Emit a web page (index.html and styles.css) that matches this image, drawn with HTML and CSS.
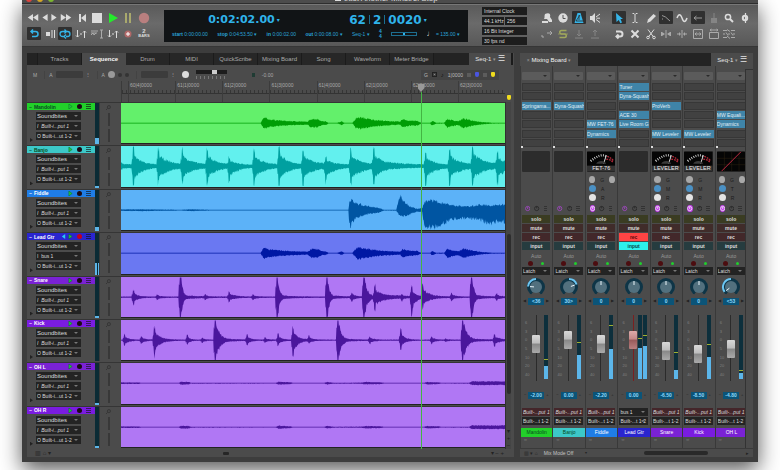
FILE: index.html
```html
<!DOCTYPE html>
<html lang="en">
<head>
<meta charset="utf-8">
<title>Just Another Minstrel Stop</title>
<link rel="stylesheet" href="styles.css">
</head>
<body>
<div class="window">
  <header class="titlebar"><i class="dot red"></i><i class="dot amber"></i><i class="dot lime"></i><span class="title"><i class="doc"></i>Just Another Minstrel Stop</span></header>

  <div class="toolbar">
    <div class="tools transport">
      <div class="tool-row">
        <div class="seek">
          <button aria-label="Rewind"><svg viewBox="0 0 12 8"><path d="M6 0v8L0 4zM12 0v8L6 4z"/></svg></button>
          <button class="slim" aria-label="Back"><svg viewBox="0 0 6 8"><path d="M6 0v8L0 4z"/></svg></button>
          <button class="slim" aria-label="Forward"><svg viewBox="0 0 6 8"><path d="M0 0v8l6-4z"/></svg></button>
          <button aria-label="Fast forward"><svg viewBox="0 0 12 8"><path d="M0 0v8l6-4zM6 0v8l6-4z"/></svg></button>
        </div>
        <button aria-label="To start"><svg viewBox="0 0 14 12"><path d="M4 2h2v8H4zM11 2v8L6 6z"/></svg></button>
        <button aria-label="Stop"><svg viewBox="0 0 14 12"><path d="M2 1h10v10H2z"/></svg></button>
        <button class="play" aria-label="Play"><svg viewBox="0 0 14 12"><path d="M3 1v10l9-5z"/></svg></button>
        <button class="pause" aria-label="Pause"><svg viewBox="0 0 14 12"><path d="M4 1h2v10H4zM8 1h2v10H8z"/></svg></button>
        <button class="record" aria-label="Record"><svg viewBox="0 0 14 12"><circle cx="7" cy="6" r="5.2"/></svg></button>
      </div>
      <div class="tool-row">
        <button class="on" aria-label="Auto rewind"><svg class="line" viewBox="0 0 14 12"><path d="M4 3.500h4.500a2.400 2.400 0 0 1 0 5H5M6 1.500l-2 2 2 2" stroke-width="1.500"/></svg></button>
        <button aria-label="Auto stop"><svg viewBox="0 0 14 12"><path d="M3 4h4v4H3zM8.500 2h1v8h-1zM11 2h1v8h-1z"/></svg></button>
        <button class="on" aria-label="Memory cycle"><svg class="line" viewBox="0 0 14 12"><path d="M8 3.500h1.500a2.500 2.500 0 0 1 0 5H8M6 8.500H4.500a2.500 2.500 0 0 1 0-5H8M6.500 1.500l2 2-2 2M8 6.500l-2 2 2 2" stroke-width="1.300"/></svg></button>
        <button aria-label="Punch"><svg class="line thin" viewBox="0 0 14 12"><path d="M3.500 2v7M2 7.500l1.500 1.500L5 7.500M6 6h2M10.500 10V3M9 4.500l1.500-1.500L12 4.500"/></svg></button>
        <button class="muted" aria-label="Selection"><svg class="line thin" viewBox="0 0 14 12"><path d="M1 3h7M1 5h6M1 7l2-2 1 2 2-2M10 2h3M10 10h3M11.500 2v8"/></svg></button>
        <button aria-label="Link"><svg class="line thin" viewBox="0 0 14 12"><path d="M3.500 2v7M2 7.500l1.500 1.500L5 7.500M6 6h2M10.500 10V3M9 4.500l1.500-1.500L12 4.500"/></svg></button>
        <button class="blush" aria-label="Overdub"><svg viewBox="0 0 14 12"><circle cx="7" cy="6" r="3.500"/><path d="M6.500 4h1v1.500H9v1H7.500V8h-1V6.500H5v-1h1.500z" fill="#fff"/></svg></button>
        <button class="bars" aria-label="Count-in"><b>2</b><span>BARS</span></button>
      </div>
    </div>

    <section class="counter" aria-label="Counter">
      <div class="clocks"><div class="time">0:02:02.00<i>▾</i></div><div class="beat">62<u></u>2<u></u>0020<i>▾</i></div></div>
      <div class="marks">
        <span><b>start</b> 0:00:00.00</span><span><b>stop</b> 0:04:53.50 ▾</span><span><b>in</b> 0:00:02.00</span><span><b>out</b> 0:00:08.00 ▾</span><span>Seq-1 ▾</span>
        <span class="sig"><em>4</em><em>4</em></span><span class="tempo-bar"></span><span><q>♩</q> = 135.00 ▾</span>
      </div>
    </section>

    <div class="sync">
      <select aria-label="Sync source"><option>Internal Clock</option></select>
      <div class="pair"><select aria-label="Sample rate"><option>44.1 kHz</option></select><select aria-label="Buffer"><option>256</option></select></div>
      <select aria-label="Bit depth"><option>16 Bit Integer</option></select>
      <select aria-label="Frame rate"><option>30 fps nd</option></select>
    </div>

    <div class="tools group-a">
      <div class="tool-row">
        <button aria-label="Solo"><svg viewBox="0 0 14 12"><path d="M5 2c4-2 6 0 5 3l2 3v2H9L7 7H4c1-1 0-3 1-5zM2 9h6v2H2z"/></svg></button>
        <button aria-label="Clock"><svg viewBox="0 0 14 12"><circle cx="7" cy="6" r="4.700"/><path d="M7 3v3.500h2.500" fill="none" stroke="#555"/></svg></button>
        <button class="on" aria-label="Metronome"><svg viewBox="0 0 14 12"><path d="M5.500 1h3l3 10h-9z"/><path d="M7 3v5M4 9l4-6M4 9h7" fill="none" stroke="#2b2b2b" stroke-width=".8"/></svg></button>
        <button aria-label="Audible"><svg viewBox="0 0 14 12"><path d="M2 4h2l3-3v10L4 8H2z"/><path d="M8 5l4-3M8.500 6.200H12M8 7.500l4 3" fill="none" stroke="#ddd"/></svg></button>
      </div>
      <div class="tool-row">
        <button class="muted" aria-label="Follow"><svg class="line thin" viewBox="0 0 14 12"><path d="M2 9h2M2 9V7M7 5h5M10 3l2 2-2 2"/></svg></button>
        <button class="olive" aria-label="Slave"><svg class="line" viewBox="0 0 14 12"><path d="M10.500 2.500H5.500a1.700 1.700 0 0 0 0 3.500h3a1.700 1.700 0 0 1 0 3.500h-5" stroke-width="1.500"/><path d="M2 6h10" stroke-width=".7"/></svg></button>
        <button class="faint" aria-label="Download"><svg class="line thin" viewBox="0 0 14 12"><path d="M7 2v6M5 6l2 2 2-2M3 10h8"/></svg></button>
        <button class="faint" aria-label="Upload"><svg class="line thin" viewBox="0 0 14 12"><path d="M7 8V2M5 4l2-2 2 2M3 10h8"/></svg></button>
      </div>
    </div>
    <div class="tools group-b">
      <div class="tool-row">
        <button class="on" aria-label="Pointer"><svg viewBox="0 0 14 12"><path d="M4 1l7 6H8.500l1.500 3.500-1.700.8L6.800 8 4.500 10z"/></svg></button>
        <button aria-label="I-beam"><svg class="line thin" viewBox="0 0 14 12"><path d="M4.500 1.500h1.500l1 1 1-1h1.500M7 2.500v7M4.500 10.500h1.500l1-1 1 1h1.500"/></svg></button>
        <button aria-label="Pencil"><svg viewBox="0 0 14 12"><path d="M3 11l1-3.500L9.500 2 12 4 6.500 9.500z"/></svg></button>
        <button class="pressed" aria-label="Reshape"><svg class="line thin" viewBox="0 0 14 12"><path d="M3 3.500l3.500 1.500 4.500 4M3 7h1"/></svg></button>
        <button aria-label="Curve"><svg class="line" viewBox="0 0 14 12"><path d="M2 6c1.500-4.500 3.500-4.500 5 0s3.500 4.500 5 0" stroke-width="1.500"/></svg></button>
        <button class="pressed" aria-label="Nudge"><svg class="line thin" viewBox="0 0 14 12"><path d="M3 6h8M5.500 4l-2.500 2 2.500 2"/></svg></button>
        <button class="faint" aria-label="Brush"><svg viewBox="0 0 14 12"><path d="M6.500 1h1v5H10v5H4V6h2.500z"/></svg></button>
        <button aria-label="Zoom"><svg class="line" viewBox="0 0 14 12"><circle cx="6" cy="5" r="2.600" stroke-width="1.500"/><path d="M8 7l3 3"/></svg></button>
        <button aria-label="Scrub"><svg class="line" viewBox="0 0 14 12"><circle cx="7" cy="6" r="2.200"/><path d="M7.500 1v10" stroke-width="1.200"/></svg></button>
      </div>
      <div class="tool-row">
        <button aria-label="Loop"><svg class="line" viewBox="0 0 14 12"><path d="M4 3.500h4a2.500 2.500 0 0 1 0 5H5M6.500 6.500l-2 2 2 2"/></svg></button>
        <button aria-label="Mute"><svg class="line" viewBox="0 0 14 12"><path d="M3.500 2.500l7 7M10.500 2.500l-7 7"/></svg></button>
        <button aria-label="Scissors"><svg class="line thin" viewBox="0 0 14 12"><path d="M4 1.500l5.500 7.500M10 1.500L4.500 9"/><circle cx="4" cy="9.500" r="1.300"/><circle cx="10" cy="9.500" r="1.300"/></svg></button>
        <button class="muted" aria-label="Split"><svg viewBox="0 0 14 12"><path d="M6.500 2h1v8h-1zM2 4h1v4H2zM3 4l3 2-3 2zM11 4h1v4h-1zM11 4L8 6l3 2z"/></svg></button>
        <button class="muted" aria-label="Join"><svg viewBox="0 0 14 12"><path d="M6.500 2h1v8h-1zM2 5.500h2V4l2 2-2 2V6.500H2zM12 5.500h-2V4L8 6l2 2V6.500h2z"/></svg></button>
        <button class="muted" aria-label="Fit"><svg class="line thin" viewBox="0 0 14 12"><path d="M2.500 1.500h9v9h-9zM4 6h6M5.500 4.500L4 6l1.500 1.500M8.500 4.500L10 6 8.500 7.500"/></svg></button>
        <button class="muted" aria-label="Region"><svg class="line thin" viewBox="0 0 14 12"><path d="M2.500 4.500h9v6h-9zM3 2h8M4.500 1L3 2l1.500 1M9.500 1L11 2 9.500 3"/></svg></button>
        <button class="muted" aria-label="Snap"><svg class="line thin" viewBox="0 0 14 12"><path d="M1 2.500h4M9 2.500h4M1 6h2M6 6h2M11 6h2M1 9.500h4M9 9.500h4M5 1.500l3 2M5 8l3 2.500M4 4.500l2 3M9 4.500l2 3"/></svg></button>
        <span class="blank"></span>
      </div>
    </div>
  </div>

  <main class="workspace">
    <section class="panel sequence">
      <nav class="tabs"><span class="lead"></span><button>Tracks</button><button class="active">Sequence</button><button>Drum</button><button>MIDI</button><button>QuickScribe</button><button>Mixing Board</button><button>Song</button><button>Waveform</button><button>Meter Bridge</button><span class="fill"></span><button class="menu">Seq-1 <small>▾</small> <b>☰</b></button></nav>
      <div class="info">
        <span class="info-m">M</span><span class="cell">A <i class="well"></i><small>⋮</small></span>
        <span class="cell">A <i class="knob grey"></i><i class="pip"></i><i class="pip"></i></span>
        <span class="cell"><i class="well"></i><small>⋮</small></span>
        <i class="knob white"></i>
        <span class="vel"><i></i></span>
        <span class="led"></span><span>-0.00</span><span class="spring"></span>
        <span class="grid-box"><span>G</span><span class="sq"></span><b>♪</b><span>1|0000</span><i></i><i class="shield blue"></i><i></i><i class="shield yellow"></i></span>
      </div>
      <div class="ruler"><div class="bars-row" id="ruler"></div><i class="shield yellow"></i></div>
      <div class="arrange">
        <ol class="tracks" id="tracks"></ol>
        <div class="scroll-v"><i></i><span>▾<br>+<br>−</span></div>
        <div class="playhead-layer"><div class="playhead"></div></div>
      </div>
      <footer class="foot"><span>▥ ⌂ ▾</span><i class="grip"></i><span>▾ − +</span></footer>
    </section>

    <section class="panel mixer">
      <nav class="tabs"><button class="active board"><small>×</small> Mixing Board <small>▾</small></button><span class="fill"></span><button class="menu">Seq-1 <small>▾</small> <b>☰</b></button></nav>
      <div class="console"><div class="strips" id="strips"></div><div class="rail"></div></div>
      <footer class="foot"><span>▥ ▾ ⌂</span><span class="mode">Mix Mode Off</span><small>▾</small><i class="bar"></i><span>▸</span></footer>
    </section>
  </main>
</div>
<script src="app.js"></script>
</body>
</html>
```
FILE: styles.css
```css
* { box-sizing: border-box; }
body {
  margin: 0; min-height: 100vh; padding: 0 22px 8px; display: flex; overflow: hidden;
  background: #fff; color: #c4c4c4; font: 6px/8px "Liberation Sans", Arial, sans-serif;
}
button, select, input { font: inherit; color: inherit; margin: 0; padding: 0; border: 0; border-radius: 0; background: none; }
select { appearance: none; min-width: 0; }
ol { margin: 0; padding: 0; list-style: none; }
i, em { font-style: normal; }
.window { flex: 1; min-width: 0; display: flex; flex-direction: column; background: #3d3d3d; box-shadow: 0 8px 20px rgba(0,0,0,.65); }

.titlebar { height: 4px; overflow: hidden; display: flex; align-items: flex-end; gap: 5px; padding-left: 4px; background: #4c4c4c; border-bottom: 1px solid #2e2e2e; }
.dot { width: 6px; height: 6px; border-radius: 50%; flex: none; margin-bottom: 1px; }
.red { background: #e0443e; } .amber { background: #d6a824; } .lime { background: #7cb82f; }
.title { flex: 1; text-align: center; margin-right: 44px; font-size: 8px; line-height: 8px; color: #ddd; }
.doc { display: inline-block; width: 6px; height: 6px; margin-right: 3px; background: #ddd; }

.toolbar { height: 42px; display: flex; align-items: center; padding: 0 6px 0 5px; background: linear-gradient(#5a5a5a, #6a6a6a 45%, #585858); border-top: 1px solid #777; }
.tools { display: flex; flex-direction: column; gap: 3px; }
.transport { width: 124px; margin-right: 13px; }
.group-a { width: 62px; margin: 0 10px 0 13px; }
.group-b { width: 140px; }
.tool-row { display: flex; justify-content: space-between; }
.tool-row button, .blank { width: 14px; height: 13px; display: grid; place-items: center; color: #dcdcdc; }
.tool-row svg { width: 100%; height: 12px; fill: currentColor; }
.tool-row .line { fill: none; stroke: currentColor; stroke-width: 2; }
.tool-row .thin { stroke-width: 1; }
.seek { width: 46px; display: flex; justify-content: space-between; padding-right: 1px; }
.tool-row .seek button { width: 12px; } .tool-row .seek .slim { width: 6px; } .tool-row .seek svg { height: 7px; }
.tool-row .on, .tool-row .pressed { background: #303030; border-radius: 1px; }
.tool-row .on { color: #35b4e8; } .tool-row .pressed { color: #999; }
.tool-row .play { color: #25ea2c; } .tool-row .pause { color: #a9a96d; } .tool-row .record { color: #b97f7f; }
.tool-row .muted { color: #aaa; } .tool-row .faint { color: #858585; } .tool-row .olive { color: #a0a85c; } .tool-row .blush { color: #b06868; }
.tool-row .bars { align-content: center; font-size: 4px; line-height: 4px; font-weight: bold; }
.bars b { font-size: 6px; line-height: 5px; }

.counter { flex: 1; height: 32px; background: #111416; color: #2aa5d8; padding: 3px 8px; display: flex; flex-direction: column; justify-content: space-between; }
.clocks { display: grid; grid-template-columns: 1fr 1fr; justify-items: center; font: bold 11px/14px "DejaVu Sans", sans-serif; color: #2fb3ea; }
.clocks > div { display: flex; align-items: center; }
.beat { font-size: 12px; }
.clocks u { width: 1px; height: 9px; margin: 0 3px; background: #1c6f92; }
.clocks i { font-size: 6px; padding-left: 2px; }
.marks { display: flex; justify-content: space-between; align-items: center; font-size: 5px; line-height: 10px; white-space: nowrap; }
.sig { display: flex; flex-direction: column; line-height: 5px; font-weight: bold; }
.tempo-bar { width: 26px; height: 4px; border: 1px solid #1d6e90; background: linear-gradient(#2fb3ea, #2fb3ea) center / 2px 2px no-repeat; }
.marks q { quotes: none; color: #ddd; font-size: 8px; }
.sync { width: 45px; margin-left: 14px; display: flex; flex-direction: column; gap: 2px; font-size: 5px; }
.sync select { width: 100%; height: 8px; padding-left: 2px; background: #1d1d1d; color: #ddd; }
.pair { display: grid; grid-template-columns: 22px 1fr; gap: 1px; }

.workspace { flex: 1; min-height: 0; display: grid; grid-template: minmax(0, 1fr) / 487fr 233fr; gap: 6px; padding: 6px 5px 5px; border-top: 1px solid #363636; }
.panel { min-width: 0; min-height: 0; display: flex; flex-direction: column; background: #4b4b4b; }
.tabs { display: flex; height: 12px; background: #232323; flex: none; }
.tabs button { flex: 0 0 44px; background: #272727; border-right: 1px solid #1b1b1b; color: #aaa; white-space: nowrap; }
.sequence .tabs { margin-right: 1px; border-right: 2px solid #1b1b1b; }
.tabs .active { background: #4b4b4b; color: #f4f4f4; font-weight: bold; border: 0; }
.tabs .lead { width: 11px; border-right: 1px solid #1b1b1b; } .fill { flex: 1; }
.tabs .menu { background: #4b4b4b; color: #e4e4e4; border: 0; flex-basis: 42px; }
.tabs small { font-size: 5px; color: #999; } .tabs b { font-weight: normal; font-size: 8px; line-height: 6px; }
.tabs .board { flex-basis: 58px; font-weight: normal; }
.mixer .tabs { height: 13px; }

.info { height: 16px; flex: none; display: flex; align-items: center; gap: 7px; padding: 3px 15px 0 6px; font-size: 5px; color: #aaa; }
.cell { display: flex; align-items: center; gap: 3px; border-left: 1px solid #434343; padding-left: 4px; }
.well { width: 27px; height: 7px; background: #3c3c3c; border-radius: 1px; }
.knob { width: 7px; height: 7px; border-radius: 50%; }
.knob.grey { background: #999; } .knob.white { background: #ddd; }
.pip { width: 4px; height: 4px; border-radius: 50%; background: #343434; }
.vel { width: 31px; height: 9px; background: linear-gradient(#1d1d1d, #1d1d1d) top / 100% 4px no-repeat, repeating-linear-gradient(90deg, #777 0 1px, transparent 1px 4px) bottom / 100% 3px no-repeat; padding-left: 16px; }
.vel i { display: block; width: 5px; height: 4px; background: #ccc; }
.led { width: 3px; height: 4px; background: #1f3b33; margin-left: 18px; }
.spring { flex: 1; }
.grid-box { display: flex; align-items: center; gap: 4px; height: 10px; padding: 0 4px 0 3px; background: #434343; color: #bbb; }
.grid-box b { color: #111; font-size: 6px; } .grid-box .sq { width: 5px; height: 5px; border: 1px solid #222; background: #888; background-clip: content-box; padding: 1px; }
.grid-box i { width: 4px; height: 4px; background: #5c5c5c; }
.grid-box .shield, .shield { width: 4px; height: 5px; border-radius: 1px 1px 2px 2px; }
.grid-box .blue { background: #4a55e0; } .grid-box .yellow, .shield.yellow { background: #f0dc1e; }

.ruler { height: 21px; flex: none; display: grid; grid-template-columns: 94px 1fr 9px; }
.bars-row { grid-column: 2; display: grid; grid-template-columns: repeat(8, 12.5%); padding-left: 6px; overflow: hidden; border-left: 1px solid #3a3a3a;
  background: linear-gradient(#333, #333) 0 12px / 100% 1px no-repeat, repeating-linear-gradient(90deg, #353535 0 1px, transparent 1px 4px) 0 9px / 100% 3px no-repeat; }
.bars-row span { border-left: 1px solid #3c3c3c; padding-left: 1px; font-size: 5px; color: #aaa; overflow: hidden; }
.ruler .shield { margin: 14px 0 0 2px; }

.arrange { flex: 1; min-height: 0; display: grid; grid-template: minmax(0, 1fr) / 1fr 9px; position: relative; }
.tracks { min-height: 0; display: grid; grid-template-rows: repeat(8, minmax(0, 1fr)); }
.track { display: grid; grid-template: minmax(0, 1fr) / 68px 4px 22px 1fr; padding-bottom: 1px; border-top: 1px solid #353535; min-height: 0; }
.name { display: flex; align-items: center; gap: 2px; height: 7px; padding: 0 4px 0 2px; background: var(--tag); color: #fff; font-weight: bold; font-size: 5px; }
.name span { flex: 1; } .name svg { width: 5px; height: 5px; }
.name .rec { width: 5px; height: 5px; border-radius: 50%; background: #1b0a14; margin: 0 2px; } .name .rec.armed { background: #c4001e; }
.name .list { width: 5px; height: 5px; background: repeating-linear-gradient(rgba(20,20,20,.65) 0 1px, transparent 1px 2px); }
.routes { position: relative; display: flex; flex-direction: column; gap: 2px; padding: 2px 14px 0 9px; }
.routes select, .strip select { height: 8px; padding-left: 1px; background: #232323; color: #dcdcdc; font-size: 5px; width: 100%; display: block; }
.routes .take select { font-size: 6px; }
.drop { position: relative; display: block; min-width: 0; }
.drop::after { content: ""; position: absolute; right: 3px; top: 3px; border: 2px solid transparent; border-top-color: #777; border-bottom: 0; }
.ital { font-style: italic; }
.twist { position: absolute; left: 3px; bottom: -2px; width: 3px; height: 4px; background: #222; clip-path: polygon(0 0, 100% 50%, 0 100%); }
.level { background: #0b2b35; display: flex; align-items: flex-end; gap: 1px; }
.level i { flex: 1; background: #5cb6ea; }
.gutter { border-left: 1px solid #393939; padding: 2px 0 2px 6px; display: flex; flex-direction: column; justify-content: space-between; }
.gutter svg { width: 5px; height: 5px; fill: none; stroke: #333; }
.gutter i { width: 2px; height: 13px; margin-left: 2px; background: #383838; }
.lane { min-width: 0; min-height: 0; background: var(--bg); border-bottom: 1px solid #222; overflow: hidden; }
.lane svg { display: block; width: 100%; height: 0; min-height: 100%; fill: var(--wave); }
.scroll-v { display: flex; flex-direction: column; justify-content: flex-end; align-items: center; background: #454545; border-left: 1px solid #303030; margin-right: 3px; line-height: 7px; color: #222; text-align: center; }
.scroll-v i { width: 4px; height: 46%; border-radius: 2px; background: #2d2d2d; margin-bottom: 34px; }
.scroll-v span { height: 21px; }
.playhead-layer { position: absolute; inset: -18px 9px 0 94px; pointer-events: none; }
.playhead { width: 7px; height: 100%; margin-left: calc(78% - 3px); background: linear-gradient(#43b543, #43b543) center 8px / 1px 100% no-repeat; }
.playhead::before { content: ""; display: block; width: 7px; height: 8px; background: #999; clip-path: polygon(0 0, 100% 0, 100% 50%, 50% 100%, 0 50%); }
.foot { height: 8px; flex: none; display: flex; align-items: center; justify-content: space-between; padding: 0 10px 0 8px; font-size: 6px; color: #222; }
.grip { width: 6px; height: 3px; border-radius: 1px; background: #262626; margin-right: 90px; }
.mixer .foot { height: 9px; gap: 6px; padding: 0 4px; border-top: 1px solid #3a3a3a; font-size: 5px; justify-content: flex-start; }
.foot .mode { color: #c4c4c4; } .foot small { flex: 1; padding-left: 6px; }
.foot .bar { width: 64px; height: 4px; border-radius: 2px; background: #292929; margin-right: 32px; }

.console { flex: 1; min-height: 0; display: grid; grid-template-columns: 1fr 8px; }
.rail { border-left: 1px solid #333; border-top: 1px solid #333; margin-top: 3px; }
.strips { min-width: 0; overflow: hidden; display: grid; grid-template-columns: repeat(7, 14.5%); border-left: 1px solid #3a3a3a; }
.strip { min-width: 0; padding: 6px 2px 0 1px; border-right: 1px solid #393939; display: flex; flex-direction: column; font-size: 5px; }
.strip > * { flex: none; }
.strip .preset { height: 8px; background: #5b5b5b; border-radius: 1px; margin-bottom: 3px; }
.strip .preset::after { border-top-color: #2a2a2a; }
.slots { height: 64px; margin-right: -1px; display: flex; flex-direction: column; justify-content: space-between; position: relative; }
.slots button { height: 8px; background: #414141; box-shadow: inset 0 0 0 1px #373737; text-align: left; line-height: 8px; overflow: hidden; white-space: nowrap; color: #e0eef5; }
.slots .used { background: #3f84a8; box-shadow: none; }
.slots::after { content: ""; position: absolute; left: -1px; bottom: -1px; width: 2px; height: 2px; background: #ddd; }
.view { height: 21px; margin-top: 4px; background: #2c2c2c; border-radius: 1px; }
.view svg { display: block; width: 100%; height: 100%; }
.view text { font: 6px "Liberation Sans", sans-serif; fill: #eee; }
.sends { height: 30px; padding: 3px 0 0 2px; }
.send { height: 9px; display: flex; align-items: center; gap: 5px; color: #1b1b1b; }
.send i { width: 7px; height: 7px; border-radius: 50%; background: #a8a8a8; } .send.b i { background: #4a90c4; } .send.c i { background: #e4e4e4; }
.power { height: 13px; display: flex; align-items: center; gap: 4px; padding: 0 3px; }
.power svg { width: 7px; height: 7px; fill: none; stroke: #272727; stroke-width: 1.500; }
.power svg:first-child { stroke: #a648c8; } .power svg.lit:first-child { background: #c53cf0; border-radius: 50%; stroke: #eee; }
.power .list { width: 5px; height: 5px; background: repeating-linear-gradient(#333 0 1px, transparent 1px 2px); }
.switches { display: grid; grid-template-rows: repeat(4, 8px); gap: 1px; }
.switches button { line-height: 8px; font-weight: bold; color: #ddd; }
.solo { background: #3a3c22; } .mute { background: #402c2a; } .arm { background: #42282a; } .mon { background: #263c3f; }
.switches .arm.live { background: #ff4444; color: #5a0a0a; } .switches .mon.live { background: #2df0ec; color: #064a4a; }
.auto { margin-top: 3px; line-height: 6px; text-align: center; color: #999; }
.leds { height: 8px; display: flex; align-items: center; justify-content: center; gap: 8px; }
.leds i { width: 5px; height: 5px; border-radius: 50%; background: #4c0d10; } .leds i + i { width: 3px; height: 3px; background: #1fd02c; }
.pan { width: 20px; height: 20px; margin: 2px auto 0; }
.value { height: 8px; display: flex; align-items: center; justify-content: center; gap: 2px; color: #222; font-size: 4px; white-space: nowrap; }
.value output { width: 16px; height: 7px; line-height: 7px; font-size: 5px; text-align: center; background: #0b5478; color: #8fd8f8; font-weight: bold; }
.fader { height: 76px; margin-top: 9px; padding: 1px 2px 9px 3px; display: grid; grid-template-columns: 6px 10px 1fr; }
.scale { font-size: 4px; color: #808080; display: flex; flex-direction: column; justify-content: space-between; line-height: 4px; padding: 6px 0 4px; }
.throw { appearance: none; writing-mode: vertical-lr; direction: rtl; width: 10px; height: 66px; min-width: 0; background: linear-gradient(#2b2b2b, #2b2b2b) center / 1px 100% no-repeat; }
.throw::-webkit-slider-thumb { appearance: none; width: 8px; height: 18px; border-radius: 1px; background: linear-gradient(#d8d8d8, #bdbdbd 45%, #888 50%, #aaa); }
.throw.hot { background-image: linear-gradient(#7a2020, #7a2020); }
.throw.hot::-webkit-slider-thumb { background: linear-gradient(#dcaaaa, #c48888 45%, #985a5a 50%, #b88080); }
.meters { display: flex; justify-content: flex-end; gap: 1px; height: 64px; }
.meters div { width: 4px; height: 100%; background: #0d2f3c; display: flex; flex-direction: column; }
.meters .peak { height: 1px; background: #a0b030; flex: none; } .meters .rms { margin-top: auto; background: #5cb6ea; }
.gain { margin-top: 1px; }
.io { margin-top: 9px; display: grid; gap: 1px; }
.io .in-red select { background: #44262a; }
.io .in-red::after, .io .in-red + .drop::after { display: none; }
.label { margin-top: 3px; height: 9px; margin-left: -1px; margin-right: -2px; line-height: 9px; text-align: center; color: #fff; background: var(--tag); }
.label.dark, .name.dark { color: #064a20; }
.link { font-size: 4px; line-height: 5px; color: #888; padding-left: 2px; }
```
FILE: app.js
```js
const H = 21;
let seed = 7;
const rand = () => (seed = (seed * 16807) % 2147483647) / 2147483647;

// Envelope from percussive hits: [x, up, down, decay]
const hits = (list, base) => x => {
  let up = base, down = base;
  for (const [hx, u, d, tau] of list) {
    if (x < hx - 1 || x > hx + tau * 6) continue;
    const k = x < hx ? 0.4 : x < hx + 1.5 ? 1.15 : 0.6 * Math.exp(-(x - hx - 1.5) / tau);
    up = Math.max(up, base + u * k);
    down = Math.max(down, base + d * k);
  }
  return [up, down];
};
// Envelope interpolated through [x, up, down] points
const shape = pts => x => {
  let i = 1;
  while (i < pts.length - 1 && pts[i][0] < x) i++;
  const a = pts[i - 1], b = pts[i], t = Math.min(1, Math.max(0, (x - a[0]) / (b[0] - a[0])));
  const a2 = a[2] ?? a[1], b2 = b[2] ?? b[1];
  return [a[1] + (b[1] - a[1]) * t, a2 + (b2 - a2) * t];
};
const wave = env => {
  const top = [], bottom = [];
  for (let x = 0; x <= 385; x += 0.5) {
    const [u, d] = env(x);
    top.push(`${x} ${(H - Math.min(20.5, Math.max(.45, u * (.72 + rand() * .4)))).toFixed(1)}`);
    bottom.unshift(`${x} ${(H + Math.min(20.5, Math.max(.45, d * (.72 + rand() * .4)))).toFixed(1)}`);
  }
  return `M${top.join('L')}L${bottom.join('L')}Z`;
};

const pluck = shape([[0,.4],[140,.4],[142,4],[144,6],[149,4],[166,2.4],[187,1.6],[191,4.800],[197,4.5],[202,2],[205,2.200],[208,.4],[217,.4],[221,2],[224,.4],[232,.4],[236,5.5],[239,6.5],[252,3.800],[266,2.400],[280,1.6],[282,4.5],[289,2.800],[297,2.5],[301,.4],[310,.4],[312,2.5],[316,.5],[324,.5],[327,4.5],[336,2.400],[339,2.5],[343,5],[352,3],[361,1.4],[372,.5],[385,.4]]);
const banjo = hits([[0,2,2,20],[12,17,19,8],[37,16,16,11],[61,16,16,10],[86,16,17,9],[108,8,16,8],[133,14,16,10],[158,19,19,9],[182,16,17,10],[182,7,6,30],[205,8,14,9],[230,15,18,12],[253,18,18,9],[253,9,7,22],[305,12,17,9],[329,15,16,11],[352,20,19,11],[352,8,6,30],[377,13,18,8],[377,8,8,40]], 1.4);
const fiddle = shape([[0,.8],[20,1],[50,.6],[60,.4],[70,1],[90,.4],[228,.4],[229,9,18],[231,12,17],[235,8,9],[245,5,5],[257,3,3],[264,.4],[276,.5],[278,9,4],[280,15,6],[284,9,7],[290,4,4],[297,1.500],[302,2],[304,9,16],[306,11,20],[315,10,20],[322,8,15],[335,5,9],[350,4,9],[358,6,10],[370,5,15],[378,6,12],[385,6,13]]);
const snare = hits([[12,6,7,4],[36,2,2,4],[59,30,30,2],[59,3,3,14],[84,2,2,4],[108,5,4,6],[132,2,2,4],[156,30,30,2],[156,4,4,10],[181,30,30,2],[181,3,3,10],[206,30,30,2],[206,3,3,12],[231,4,4,4],[243,30,30,3],[254,11,12,9],[254,6,5,20],[281,3,3,4],[291,10,17,4],[302,12,11,7],[331,3,3,4],[351,30,30,2],[351,4,4,10],[376,3,3,4]].filter(h => h[0] !== 181), .7);
const kick = hits([[3,5,5,4],[20,3,3,4],[33,12,15,6],[66,4,4,3],[81,2,2,3],[94,30,30,4],[94,5,5,12],[126,5,4,4],[144,2,2,4],[157,5,5,4],[172,12,16,5],[188,4,3,4],[217,30,30,3],[217,4,4,10],[249,3,3,4],[280,10,8,4],[311,3,3,4],[325,1,1,4],[342,30,30,4],[342,4,4,14],[374,5,5,6]], .6);
const room = shape([[0,.9],[18,.8],[20,.4],[58,.4],[60,1.5],[68,1.3],[70,.5],[155,.4],[158,1.6],[170,1],[172,.4],[204,.4],[207,1.4],[213,.5],[240,.6],[246,1.3],[260,1],[264,.4],[304,.4],[307,1.3],[318,1],[321,.4],[349,.5],[352,2],[385,2]]);

const P = '#b077f4', V = '#4a169c';
const tracks = [
  ['Mandolin', '#22d02a', '#63f06b', '#009d06', pluck, [16], 1],
  ['Banjo', '#3cc8c8', '#62f0ee', '#00a0a0', banjo, [5], 1],
  ['Fiddle', '#1f7de6', '#5cb2f8', '#0055a2', fiddle, [9]],
  ['Lead Gtr', '#2a25cf', '#6a78f2', '#0018a4', pluck, [28, 28]],
  ['Snare', '#7a22d4', P, V, snare, [5]],
  ['Kick', '#7a1ce0', P, V, kick, [0]],
  ['OH L', '#7a22d4', P, V, room, [5]],
  ['OH R', '#7a1ce0', P, V, room, [5]]
];
const drop = (label, text, cls = '') => `<label class="drop ${cls}"><select aria-label="${label}"><option>${text}</option></select></label>`;

document.getElementById('ruler').innerHTML =
  ['60|4|0000', '61|1|0000', '61|2|0000', '61|3|0000', '61|4|0000', '62|1|0000', '62|2|0000', '62|3|0000'].map(t => `<span>${t}</span>`).join('');

document.getElementById('tracks').innerHTML = tracks.map(([name, tag, bg, ink, env, lv, dark]) => {
  const lead = name === 'Lead Gtr';
  return `<li class="track" style="--tag:${tag};--bg:${bg};--wave:${ink}">
  <div><div class="name ${dark ? 'dark' : ''}">~ <span>${name}</span>${lead ? '<svg viewBox="0 0 6 6"><path d="M5 0v6L1 3z" fill="#28c8f0"/></svg>' : ''}
    <svg viewBox="0 0 6 6"><path d="M1 0v6l4-3z" fill="#20c040" stroke="#086020" stroke-width=".5"/></svg><i class="rec ${lead ? 'armed' : ''}"></i><i class="list"></i></div>
    <div class="routes">${drop('Take', 'Soundbites', 'take')}${lead ? drop('Input', 'I&nbsp; bus 1') : drop('Input', 'I&nbsp; Built-i...put 1', 'ital')}${drop('Output', 'O Built-i...ut 1-2')}<i class="twist"></i></div></div>
  <div class="level">${lv.map(v => `<i style="height:${v}%"></i>`).join('')}</div>
  <div class="gutter"><svg viewBox="0 0 6 6"><circle cx="3.500" cy="2.500" r="1.800"/><path d="M2 4L0 6"/></svg><i></i><i></i></div>
  <div class="lane"><svg viewBox="0 0 385 42" preserveAspectRatio="none"><path d="${wave(env)}"/></svg></div></li>`;
}).join('');

const vu = label => `<svg viewBox="0 0 31 21"><path fill="#050505" d="M0 0h31v21H0z"/><path fill="#333" d="M0 15h31v6H0z"/>
  <path d="M4 10Q15 1 21 5" fill="none" stroke="#ccc" stroke-width="2.500" stroke-dasharray="1 1.500"/><path d="M22 5q4 1 7 5M21 8q4 0 7 3" fill="none" stroke="#b02838" stroke-width="1.500" stroke-dasharray="2 1"/>
  <path d="M18 13l3-9" stroke="#eee"/><path d="M10 13a6 5 0 0 1 11 0z" fill="#3a3a3a"/><text x="15.500" y="20" text-anchor="middle">${label}</text></svg>`;
const curve = '<svg viewBox="0 0 31 21"><path fill="#050505" d="M0 0h31v21H0z"/><path d="M8 0v21M16 0v21M24 0v21M0 7h31M0 14h31" stroke="#2a2012" stroke-width=".6"/><path d="M5 21L26 0" stroke="#d02c48" fill="none"/></svg>';

const strips = [
  { n: 'Mandolin', s: { 2: 'Springama...' }, pan: -36, v: '-2.00', f: 58, m: [[20, 68]] },
  { n: 'Banjo', s: { 2: 'Dyna-Squash' }, pan: 30, v: '0.00', f: 67, m: [[37, 42]] },
  { n: 'Fiddle', s: { 4: 'MW FET-76', 5: 'Dynamics' }, view: vu('FET-76'), k: 'GAR', pan: 0, v: '-2.20', f: 58, m: [[47, 16]] },
  { n: 'Lead Gtr', s: { 0: 'Tuner', 1: 'Dyna-Squash', 3: 'ACE 30', 4: 'Live Room G' }, pan: 0, v: '0.00', f: 67, hot: 1, m: [[49, 36], [52, 31]] },
  { n: 'Snare', s: { 2: 'ProVerb', 5: 'MW Leveler' }, view: vu('LEVELER'), k: 'GMR', pan: 0, v: '-6.50', f: 43, m: [[14, 58]] },
  { n: 'Kick', s: { 5: 'MW Leveler' }, view: vu('LEVELER'), k: 'GMR', pan: 0, v: '-8.50', f: 37, m: [[34, 46]] },
  { n: 'OH L', s: { 3: 'MW Equali...', 4: 'Dynamics' }, view: curve, k: 'GTR', pan: -53, v: '-4.80', f: 48, m: [[9, 86]] }
];
const knob = p => {
  const a = p * 2.4 * Math.PI / 180, pt = (r, t) => `${(10 + r * Math.sin(t)).toFixed(1)} ${(10 - r * Math.cos(t)).toFixed(1)}`;
  return `<svg class="pan" viewBox="0 0 20 20"><circle cx="10" cy="10" r="9" fill="#0e3547"/><path d="M4 19l6-8 6 8z" fill="#4b4b4b"/>
  <path d="M${pt(8, 0)}A8 8 0 0 ${p > 0 ? 1 : 0} ${pt(8, a)}" fill="none" stroke="#6cc6f2" stroke-width="2"/><circle cx="10" cy="10" r="6" fill="#52707e"/><path d="M${pt(2, a)}L${pt(6, a)}" stroke="#e8f4fa"/></svg>`;
};
const power = lit => `<svg class="${lit ? 'lit' : ''}" viewBox="0 0 10 10"><circle cx="5" cy="5" r="4"/><path d="M5 2v4"/></svg><svg viewBox="0 0 10 10"><circle cx="5" cy="5" r="4"/><path d="M5 1v4"/></svg><i class="list"></i>`;

document.getElementById('strips').innerHTML = strips.map(c => {
  const t = tracks.find(x => x[0] === c.n);
  return `<article class="strip" style="--tag:${t[1]}">
  <div class="preset drop"></div>
  <div class="slots">${[0, 1, 2, 3, 4, 5, 6].map(i => `<button class="${c.s[i] ? 'used' : ''}" aria-label="Insert ${i + 1}">${c.s[i] || ''}</button>`).join('')}</div>
  <div class="view">${c.view || ''}</div>
  <div class="sends">${c.k ? [...c.k].map((l, i) => `<div class="send ${'abc'[i]}"><i></i>${l}${i === 0 && c.k !== 'GMR' ? '<i></i>' : ''}</div>`).join('') : ''}</div>
  <div class="power">${power(c.view)}</div>
  <div class="switches"><button class="solo">solo</button><button class="mute">mute</button><button class="arm ${c.hot ? 'live' : ''}">rec</button><button class="mon ${c.hot ? 'live' : ''}">input</button></div>
  <div class="auto">Auto</div><div class="leds"><i></i><i></i></div>
  ${drop('Automation', 'Latch')}
  ${knob(c.pan)}
  <div class="value">◀<output>${c.pan < 0 ? '&lt;' + -c.pan : c.pan > 0 ? c.pan + '&gt;' : '0'}</output>▶</div>
  <div class="fader"><div class="scale"><span>6</span><span>3</span><span>0</span><span>5</span><span>10</span><span>20</span><span>40</span></div>
    <input class="throw ${c.hot ? 'hot' : ''}" type="range" aria-label="${c.n} level" value="${c.f}">
    <div class="meters">${c.m.map(([r, p]) => `<div><span style="height:${p}%"></span><i class="peak"></i><i class="rms" style="height:${r}%"></i></div>`).join('')}</div></div>
  <div class="value gain">−<output>${c.v}</output>+</div>
  <div class="io">${c.hot ? drop('Input', 'bus 1') : drop('Input', 'Built-...put 1', 'ital in-red')}${drop('Output', 'Built-...t 1-2')}</div>
  <div class="label ${t[6] ? 'dark' : ''}">${c.n}</div><div class="link">∞</div></article>`;
}).join('');
```
